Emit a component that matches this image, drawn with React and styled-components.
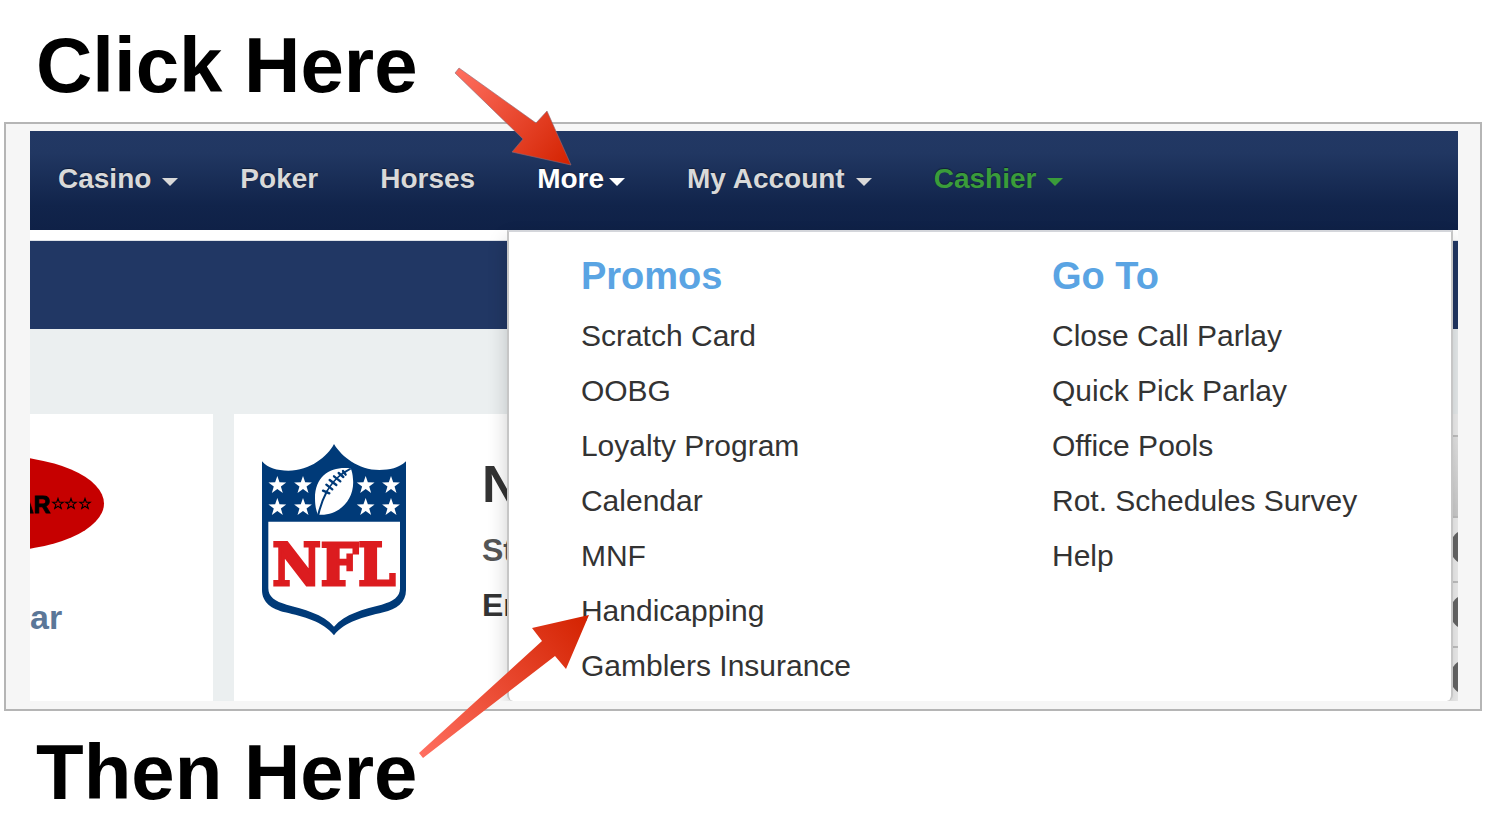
import React from 'react';
import styled, { createGlobalStyle } from 'styled-components';

const GlobalStyle = createGlobalStyle`
  * {
    box-sizing: border-box;
  }
  body {
    margin: 0;
    background: #ffffff;
    font-family: 'Liberation Sans', Arial, sans-serif;
    color: #333333;
  }
  h1, h2, h3, p, ul {
    margin: 0;
    padding: 0;
  }
  ul {
    list-style: none;
  }
`;

const Page = styled.main`
  position: relative;
  padding: 20px 4px 0;
  overflow: hidden;
`;

const Caption = styled.h1`
  padding-left: 32px;
  color: #000000;
  font-size: 78px;
  font-weight: bold;
  line-height: 90px;
`;

const Frame = styled.div`
  margin: 12px 0 16px;
  padding: 7px 22px 8px 24px;
  border: 2px solid #b5b5b5;
  background: #f6f6f6;
`;

const Site = styled.div`
  position: relative;
  overflow: hidden;
  background: #ffffff;
`;

const Nav = styled.nav`
  display: flex;
  align-items: center;
  gap: 62px;
  height: 99px;
  padding: 0 28px 4px;
  background: linear-gradient(#223864 0%, #213762 22%, #11244b 75%, #0f2147 100%);
`;

const NavButton = styled.button`
  display: flex;
  align-items: center;
  gap: ${({ $open }) => ($open ? '5px' : '11px')};
  padding: 0;
  border: 0;
  background: none;
  color: ${({ $color }) => $color || '#d9d9d9'};
  font-family: inherit;
  font-size: 28px;
  font-weight: bold;
  line-height: 32px;
  white-space: nowrap;
  text-shadow: 0 -1px 1px rgba(0, 0, 0, 0.4);
  cursor: pointer;
`;

const Caret = styled.span`
  margin-top: 6px;
  border-top: 8px solid currentColor;
  border-left: 8px solid transparent;
  border-right: 8px solid transparent;
`;

const SubBar = styled.div`
  height: 89px;
  margin-top: 10px;
  border-top: 1px solid #dfe2e8;
  background: #213764;
  background-clip: padding-box;
`;

const Content = styled.div`
  display: flex;
  gap: 21px;
  padding-top: 85px;
  background: #ebeff0;
`;

const TeamCard = styled.section`
  width: 183px;
  height: 287px;
  padding-top: 42px;
  background: #ffffff;
`;

const TeamLogo = styled.svg`
  display: block;
  width: 76px;
  height: 98px;
`;

const TeamName = styled.p`
  margin-top: 44px;
  color: #5b7798;
  font-size: 34px;
  font-weight: bold;
  line-height: 38px;
`;

const LeagueCard = styled.section`
  display: flex;
  flex: 1;
  gap: 74px;
  height: 287px;
  padding: 28px 26px;
  background: #ffffff;
`;

const LeagueLogo = styled.svg`
  width: 148px;
  height: 194px;
`;

const LeagueInfo = styled.div`
  padding-top: 12px;
`;

const LeagueTitle = styled.h2`
  font-size: 52px;
  line-height: 60px;
`;

const LeagueLine = styled.p`
  padding-top: 17px;
  color: ${({ $dark }) => ($dark ? '#333333' : '#555555')};
  font-size: 32px;
  font-weight: bold;
  line-height: 38px;
`;

const SideList = styled.ul`
  width: 12px;
  height: 287px;
  margin-left: -21px;
  padding-top: 21px;
  background: #f2f2f2;
`;

const SideHead = styled.li`
  height: 81px;
  border-top: 2px solid #c4c4c4;
  background: linear-gradient(#e8e8e8, #cfcfcf);
`;

const SideRow = styled.li`
  height: 65px;
  padding: 11px 0 0 4px;
  border-top: 2px solid #c4c4c4;
`;

const Dot = styled.span`
  display: block;
  width: 36px;
  height: 36px;
  border-radius: 50%;
  background: #686868;
`;

const Dropdown = styled.div`
  position: absolute;
  top: 99px;
  right: 5px;
  bottom: 0;
  left: 33.4%;
  display: grid;
  grid-template-columns: 1fr 1fr;
  padding-top: 13px;
  border: 2px solid #c6c6c6;
  border-top-color: #d4d6db;
  border-bottom: 0;
  border-radius: 0 0 6px 6px;
  background: #ffffff;
  box-shadow: 0 10px 20px rgba(0, 0, 0, 0.2);
`;

const MenuColumn = styled.section`
  padding-left: 72px;
`;

const MenuTitle = styled.h3`
  padding-bottom: 1px;
  color: #5aa4e3;
  font-size: 38px;
  line-height: 62px;
`;

const MenuItem = styled.li`
  height: 55px;
`;

const MenuLink = styled.a`
  color: #333333;
  font-size: 30px;
  line-height: 55px;
  text-decoration: none;
  white-space: nowrap;
`;

const Arrow = styled.svg`
  position: absolute;
  top: ${({ $top }) => $top};
  left: ${({ $left }) => $left};
  pointer-events: none;
`;

const navItems = [
  { label: 'Casino', caret: true },
  { label: 'Poker' },
  { label: 'Horses' },
  { label: 'More', caret: true, open: true, color: '#ffffff' },
  { label: 'My Account', caret: true },
  { label: 'Cashier', caret: true, color: '#3a9c3a' },
];

const menus = [
  {
    title: 'Promos',
    links: [
      'Scratch Card',
      'OOBG',
      'Loyalty Program',
      'Calendar',
      'MNF',
      'Handicapping',
      'Gamblers Insurance',
    ],
  },
  {
    title: 'Go To',
    links: [
      'Close Call Parlay',
      'Quick Pick Parlay',
      'Office Pools',
      'Rot. Schedules Survey',
      'Help',
    ],
  },
];

const starPoints = (cx, cy, r) =>
  Array.from({ length: 10 }, (_, i) => {
    const radius = i % 2 ? r * 0.4 : r;
    const angle = (Math.PI / 5) * i - Math.PI / 2;
    return `${cx + radius * Math.cos(angle)},${cy + radius * Math.sin(angle)}`;
  }).join(' ');

const AllStarLogo = () => (
  <TeamLogo viewBox="30 456 76 98" aria-hidden="true">
    <ellipse cx="-8" cy="503.5" rx="112" ry="48" fill="#c60000" />
    <text x="50" y="513" textAnchor="end" fontSize="23" fontWeight="bold" stroke="#000" strokeWidth="1">
      AR
    </text>
    {[58, 71, 85].map((x) => (
      <polygon key={x} points={starPoints(x, 504, 5.5)} fill="none" stroke="#000" strokeWidth="1.1" />
    ))}
  </TeamLogo>
);

const NflLogo = () => (
  <LeagueLogo viewBox="60 66 444 582" role="img" aria-label="NFL">
    <path
      fill="#003a78"
      d="M282 72C262 110 210 152 145 152C110 152 85 145 66 124V510C66 548 95 567 135 577C190 590 250 605 282 646C314 605 370 592 430 577C470 567 498 548 498 510V124C475 145 450 150 418 150C355 150 305 110 282 72Z"
    />
    <path
      fill="#fff"
      d="M85 305H480V505C480 530 460 545 425 554C370 567 315 582 282 620C250 582 190 567 140 554C105 545 85 530 85 505Z"
    />
    {[112, 189, 377, 453].map((x) => (
      <g key={x} fill="#fff">
        <polygon points={starPoints(x, 196, 28)} />
        <polygon points={starPoints(x, 262, 28)} />
      </g>
    ))}
    <path
      fill="#fff"
      d="M332 145C275 138 225 165 225 235C225 255 228 272 234 284C300 290 345 235 339 178C338 163 336 153 332 145Z"
    />
    <g fill="none" stroke="#003a78" strokeLinecap="round">
      <path strokeWidth="6" d="M235 284Q244 245 260 215M308 160L330 147" />
      <path strokeWidth="5" d="M260 215Q280 180 308 160" />
      <path strokeWidth="7" d="M249 212L268 220M259 194L277 208M269 180L289 195M282 169L301 184M296 159L310 171M309 153L317 164" />
    </g>
    <text
      x="282"
      y="494"
      textAnchor="middle"
      fill="#dc1c1f"
      stroke="#dc1c1f"
      strokeWidth="9"
      fontFamily="'DejaVu Serif Condensed', 'DejaVu Serif', serif"
      fontSize="176"
      fontWeight="bold"
    >
      NFL
    </text>
  </LeagueLogo>
);

const App = () => (
  <>
    <GlobalStyle />
    <Page>
      <Caption>Click Here</Caption>
      <Frame>
        <Site>
          <Nav>
            {navItems.map(({ label, caret, open, color }) => (
              <NavButton key={label} type="button" $open={open} $color={color}>
                {label}
                {caret && <Caret />}
              </NavButton>
            ))}
          </Nav>
          <SubBar />
          <Content>
            <TeamCard>
              <AllStarLogo />
              <TeamName>ar</TeamName>
            </TeamCard>
            <LeagueCard>
              <NflLogo />
              <LeagueInfo>
                <LeagueTitle>N</LeagueTitle>
                <LeagueLine>St</LeagueLine>
                <LeagueLine $dark>En</LeagueLine>
              </LeagueInfo>
            </LeagueCard>
            <SideList>
              <SideHead />
              <SideRow><Dot /></SideRow>
              <SideRow><Dot /></SideRow>
              <SideRow><Dot /></SideRow>
            </SideList>
          </Content>
          <Dropdown>
            {menus.map(({ title, links }) => (
              <MenuColumn key={title}>
                <MenuTitle>{title}</MenuTitle>
                <ul>
                  {links.map((link) => (
                    <MenuItem key={link}>
                      <MenuLink href="#">{link}</MenuLink>
                    </MenuItem>
                  ))}
                </ul>
              </MenuColumn>
            ))}
          </Dropdown>
        </Site>
      </Frame>
      <Caption as="h2">Then Here</Caption>

      <Arrow $top="66px" $left="454px" width="120" height="102" viewBox="454 66 120 102" aria-hidden="true">
        <defs>
          <linearGradient id="arrowDown" x1="456" y1="70" x2="571" y2="165" gradientUnits="userSpaceOnUse">
            <stop offset="0" stopColor="#ff6f60" />
            <stop offset="1" stopColor="#d32200" />
          </linearGradient>
        </defs>
        <path
          fill="url(#arrowDown)"
          stroke="#8c6a78"
          strokeOpacity="0.6"
          d="M459 68L536 123L547 111L571 165L512 152L523 139L455 73Z"
        />
      </Arrow>
      <Arrow $top="612px" $left="416px" width="176" height="148" viewBox="416 612 176 148" aria-hidden="true">
        <defs>
          <linearGradient id="arrowUp" x1="420" y1="756" x2="589" y2="615" gradientUnits="userSpaceOnUse">
            <stop offset="0" stopColor="#ff6f60" />
            <stop offset="1" stopColor="#d32200" />
          </linearGradient>
        </defs>
        <path
          fill="url(#arrowUp)"
          d="M419 753L542 641L532 628L589 615L566 669L555 656L423 758Z"
        />
      </Arrow>
    </Page>
  </>
);

export default App;
